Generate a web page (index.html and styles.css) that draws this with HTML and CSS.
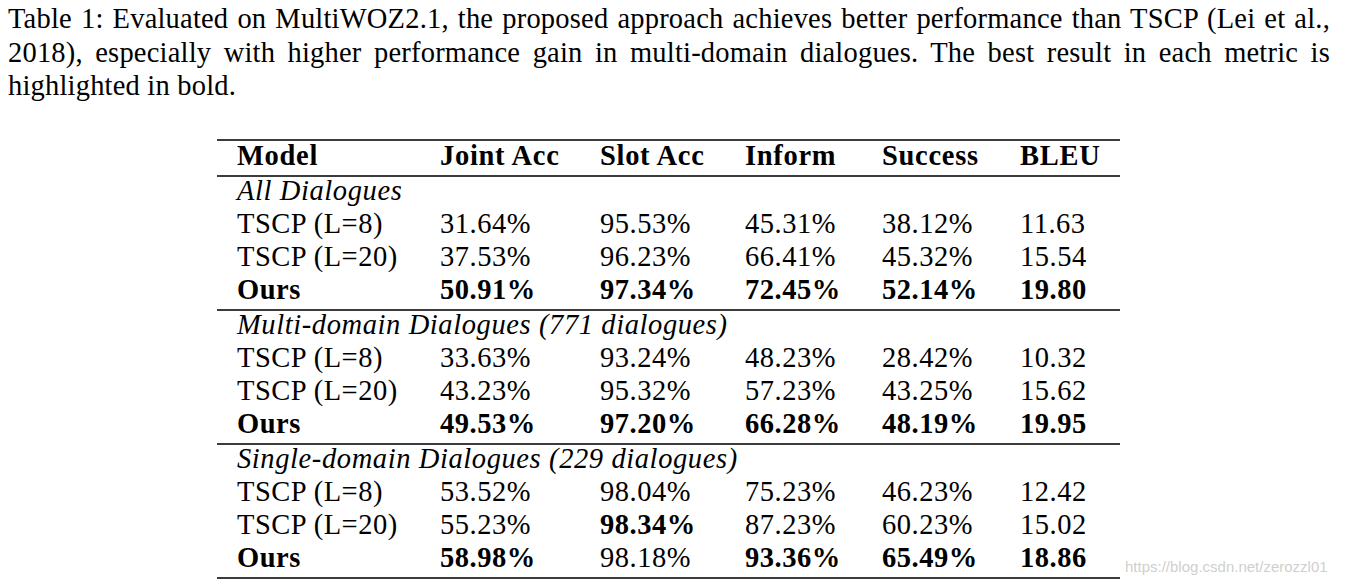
FILE: index.html
```html
<!DOCTYPE html>
<html>
<head>
<meta charset="utf-8">
<link rel="stylesheet" href="styles.css">
</head>
<body>
<div class="page">
  <p class="caption">
    <span class="line">Table 1: Evaluated on MultiWOZ2.1, the proposed approach achieves better performance than TSCP (Lei et al.,</span>
    <span class="line">2018), especially with higher performance gain in multi-domain dialogues. The best result in each metric is</span>
    <span class="line last">highlighted in bold.</span>
  </p>
  <table class="results">
    <thead>
      <tr><th>Model</th><th>Joint Acc</th><th>Slot Acc</th><th>Inform</th><th>Success</th><th>BLEU</th></tr>
    </thead>
    <tbody>
      <tr class="section"><td colspan="6">All Dialogues</td></tr>
      <tr><td>TSCP (L=8)</td><td>31.64%</td><td>95.53%</td><td>45.31%</td><td>38.12%</td><td>11.63</td></tr>
      <tr><td>TSCP (L=20)</td><td>37.53%</td><td>96.23%</td><td>66.41%</td><td>45.32%</td><td>15.54</td></tr>
      <tr class="best"><td>Ours</td><td>50.91%</td><td>97.34%</td><td>72.45%</td><td>52.14%</td><td>19.80</td></tr>
    </tbody>
    <tbody>
      <tr class="section"><td colspan="6">Multi-domain Dialogues (771 dialogues)</td></tr>
      <tr><td>TSCP (L=8)</td><td>33.63%</td><td>93.24%</td><td>48.23%</td><td>28.42%</td><td>10.32</td></tr>
      <tr><td>TSCP (L=20)</td><td>43.23%</td><td>95.32%</td><td>57.23%</td><td>43.25%</td><td>15.62</td></tr>
      <tr class="best"><td>Ours</td><td>49.53%</td><td>97.20%</td><td>66.28%</td><td>48.19%</td><td>19.95</td></tr>
    </tbody>
    <tbody>
      <tr class="section"><td colspan="6">Single-domain Dialogues (229 dialogues)</td></tr>
      <tr><td>TSCP (L=8)</td><td>53.52%</td><td>98.04%</td><td>75.23%</td><td>46.23%</td><td>12.42</td></tr>
      <tr><td>TSCP (L=20)</td><td>55.23%</td><td><b>98.34%</b></td><td>87.23%</td><td>60.23%</td><td>15.02</td></tr>
      <tr><td><b>Ours</b></td><td><b>58.98%</b></td><td>98.18%</td><td><b>93.36%</b></td><td><b>65.49%</b></td><td><b>18.86</b></td></tr>
    </tbody>
  </table>
  <div class="watermark">https://blog.csdn.net/zerozzl01</div>
</div>
</body>
</html>
```
FILE: styles.css
```css
html, body {
  margin: 0;
  padding: 0;
  background: #ffffff;
}
.page {
  position: relative;
  width: 1346px;
  height: 585px;
  padding: 2px 8px 0 8px;
  box-sizing: border-box;
  font-family: "Liberation Serif", "Times New Roman", serif;
  color: #000;
}
.caption {
  margin: 0;
  width: 1322px;
  font-size: 28.5px;
  line-height: 33.5px;
  letter-spacing: 0.2px;
}
.caption .line {
  display: block;
  text-align: justify;
  text-align-last: justify;
}
.caption .line.last {
  text-align-last: left;
}
.results {
  margin: 36px 0 0 209px;
  border-collapse: collapse;
  width: 903px;
  font-size: 28.5px;
  letter-spacing: 0.5px;
  table-layout: fixed;
  border-top: 2px solid #3c3c3c;
  border-bottom: 2px solid #3c3c3c;
}
.results th, .results td {
  padding: 0 0 6px 0;
  line-height: 27px;
  text-align: left;
  white-space: nowrap;
}
.results th:nth-child(1), .results td:nth-child(1) { width: 203px; padding-left: 20px; }
.results th:nth-child(2) { width: 160px; }
.results th:nth-child(3) { width: 145px; }
.results th:nth-child(4) { width: 137px; }
.results th:nth-child(5) { width: 138px; }
.results th:nth-child(6) { width: 100px; }
.results thead th {
  font-weight: bold;
  padding-top: 1px;
  letter-spacing: 0.7px;
}
.results thead tr {
  border-bottom: 2px solid #3c3c3c;
}
.results tbody + tbody {
  border-top: 2px solid #3c3c3c;
}
.results .section td {
  font-style: italic;
  letter-spacing: 0.6px;
}
.results .best td {
  font-weight: bold;
}
.watermark {
  position: absolute;
  left: 1125px;
  top: 558px;
  font-family: "Liberation Sans", Arial, sans-serif;
  font-size: 15px;
  color: #cfcfcf;
  letter-spacing: 0;
  white-space: nowrap;
}
```
